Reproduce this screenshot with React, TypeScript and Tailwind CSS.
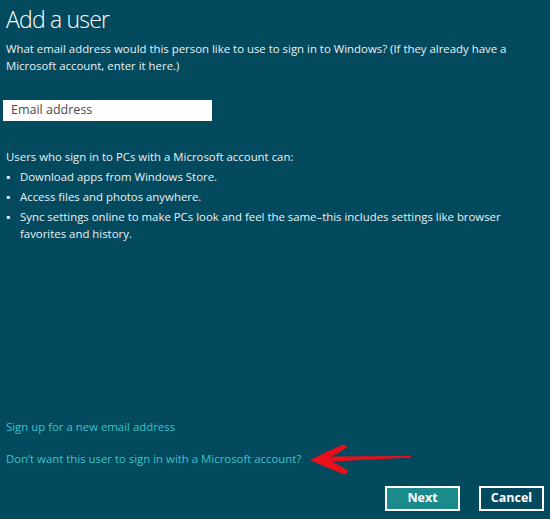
import React from "react";

export default function App() {
  const font = { fontFamily: '"Open Sans", "Noto Sans", sans-serif' };
  return (
    <div
      className="w-[550px] h-[519px] bg-[#044a5f] text-[#e8f1f3] relative overflow-hidden flex flex-col"
      style={font}
    >
      <div className="px-[6px] pt-[3px]">
        <h1 className="text-[23px] leading-[32px] font-light tracking-[-0.8px] text-white">Add a user</h1>
        <p className="mt-[5px] text-[11.4px] leading-[17px]">
          What email address would this person like to use to sign in to Windows? (If they already have a Microsoft account, enter it here.)
        </p>
      </div>
      <div className="mt-[26px] ml-[3px] w-[209px] h-[21px] bg-white flex items-center px-[8px] text-[12.5px] text-[#4a4a4a]">
        Email address
      </div>
      <div className="px-[6px] mt-[27px] text-[11.4px] leading-[17px]">
        <p>Users who sign in to PCs with a Microsoft account can:</p>
        <ul className="mt-[3px] flex flex-col gap-[3px]">
          <li className="flex">
            <span className="w-[14px] shrink-0">▪</span>
            <span>Download apps from Windows Store.</span>
          </li>
          <li className="flex">
            <span className="w-[14px] shrink-0">▪</span>
            <span>Access files and photos anywhere.</span>
          </li>
          <li className="flex">
            <span className="w-[14px] shrink-0">▪</span>
            <span>Sync settings online to make PCs look and feel the same–this includes settings like browser favorites and history.</span>
          </li>
        </ul>
      </div>
      <div className="flex-1" />
      <div className="px-[6px] text-[11.4px] leading-[17px] text-[#3cc3c6] flex flex-col gap-[15px]">
        <span>Sign up for a new email address</span>
        <span>Don’t want this user to sign in with a Microsoft account?</span>
      </div>
      <div className="flex justify-end gap-[19px] pr-[6px] pb-[8px] mt-[19px]">
        <button className="w-[75px] h-[25px] border-2 border-white bg-[#1a8a8b] text-white font-bold text-[12.5px]">Next</button>
        <button className="w-[65px] h-[25px] border-2 border-white bg-[#044a5f] text-white font-bold text-[12.5px]">Cancel</button>
      </div>
      <svg className="absolute left-[305px] top-[440px]" width="110" height="40" viewBox="0 0 110 40">
        <path
          d="M5 20 Q20 12 37 5 Q41 4 42 7 Q36 12 26 16.5 L106 16 L106 17.5 L27 21.5 Q38 27 43 31 Q42 35 38 34 Q20 27 5 20 Z"
          fill="#e8101a"
        />
      </svg>
    </div>
  );
}
